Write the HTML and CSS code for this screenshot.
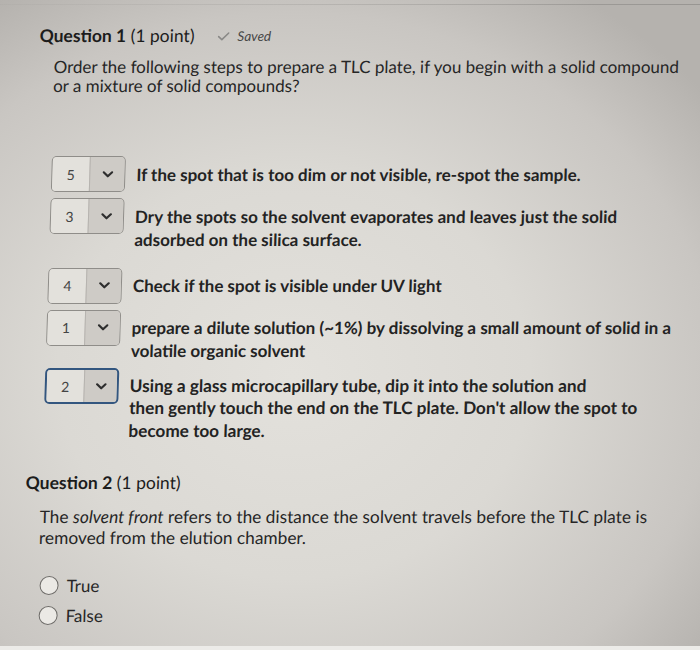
FILE: index.html
```html
<!DOCTYPE html>
<html lang="en">
<head>
<meta charset="utf-8">
<title>Quiz</title>
<link rel="stylesheet" href="styles.css">
</head>
<body>
<div class="screen">
  <div class="topline"></div>
  <div class="sheet">
    <section class="question">
      <div class="q-head">
        <span class="q-title"><b>Question 1</b> (1 point)</span>
        <span class="saved">
          <svg class="saved-check" width="12" height="9" viewBox="0 0 12 9"><path d="M1 4.6 L4.3 7.6 L11 1" fill="none" stroke="#8a8987" stroke-width="1.6" stroke-linecap="round" stroke-linejoin="round"/></svg>
          Saved
        </span>
      </div>
      <p class="prompt">Order the following steps to prepare a TLC plate, if you begin with a solid compound<br>or a mixture of solid compounds?</p>

      <div class="order-list">
        <div class="step">
          <div class="select"><span class="select-val">5</span><span class="select-arrow"><svg width="11" height="7" viewBox="0 0 11 7"><path d="M1.3 1.3 L5.5 5.3 L9.7 1.3" fill="none" stroke="#2e2e2e" stroke-width="2.2" stroke-linecap="round" stroke-linejoin="round"/></svg></span></div>
          <div class="step-text">If the spot that is too dim or not visible, re-spot the sample.</div>
        </div>
        <div class="step step-spaced">
          <div class="select"><span class="select-val">3</span><span class="select-arrow"><svg width="11" height="7" viewBox="0 0 11 7"><path d="M1.3 1.3 L5.5 5.3 L9.7 1.3" fill="none" stroke="#2e2e2e" stroke-width="2.2" stroke-linecap="round" stroke-linejoin="round"/></svg></span></div>
          <div class="step-text">Dry the spots so the solvent evaporates and leaves just the solid<br>adsorbed on the silica surface.</div>
        </div>
        <div class="step">
          <div class="select"><span class="select-val">4</span><span class="select-arrow"><svg width="11" height="7" viewBox="0 0 11 7"><path d="M1.3 1.3 L5.5 5.3 L9.7 1.3" fill="none" stroke="#2e2e2e" stroke-width="2.2" stroke-linecap="round" stroke-linejoin="round"/></svg></span></div>
          <div class="step-text">Check if the spot is visible under UV light</div>
        </div>
        <div class="step">
          <div class="select"><span class="select-val">1</span><span class="select-arrow"><svg width="11" height="7" viewBox="0 0 11 7"><path d="M1.3 1.3 L5.5 5.3 L9.7 1.3" fill="none" stroke="#2e2e2e" stroke-width="2.2" stroke-linecap="round" stroke-linejoin="round"/></svg></span></div>
          <div class="step-text">prepare a dilute solution (~1%) by dissolving a small amount of solid in a<br>volatile organic solvent</div>
        </div>
        <div class="step">
          <div class="select select-focus"><span class="select-val">2</span><span class="select-arrow"><svg width="11" height="7" viewBox="0 0 11 7"><path d="M1.3 1.3 L5.5 5.3 L9.7 1.3" fill="none" stroke="#2e2e2e" stroke-width="2.2" stroke-linecap="round" stroke-linejoin="round"/></svg></span></div>
          <div class="step-text step-text-tight">Using a glass microcapillary tube, dip it into the solution and<br>then gently touch the end on the TLC plate. Don't allow the spot to<br>become too large.</div>
        </div>
      </div>
    </section>

    <section class="question question-2">
      <div class="q-head">
        <span class="q-title"><b>Question 2</b> (1 point)</span>
      </div>
      <p class="prompt prompt-2">The <i>solvent front</i> refers to the distance the solvent travels before the TLC plate is<br>removed from the elution chamber.</p>
      <div class="radios">
        <label class="radio-opt"><span class="radio"></span>True</label>
        <label class="radio-opt"><span class="radio"></span>False</label>
      </div>
    </section>
  </div>
</div>
</body>
</html>
```

FILE: styles.css
```css
html, body {
  margin: 0;
  padding: 0;
}

.screen {
  width: 700px;
  height: 650px;
  box-sizing: border-box;
  overflow: hidden;
  border-bottom: 4px solid #ecebe8;
  background:
    radial-gradient(ellipse 75% 70% at 42% 58%, #e3e1dc 0%, #dbd9d4 45%, #c9c6c2 80%, #b5b2ae 100%);
  font-family: Lato, "Open Sans", "Liberation Sans", sans-serif;
  color: #262626;
}

.topline {
  height: 1px;
  margin-top: 4px;
  background: linear-gradient(90deg, rgba(0, 0, 0, 0.02), rgba(0, 0, 0, 0.16));
}

.sheet {
  transform: skewX(-1.78deg);
  transform-origin: 0 0;
  padding-left: 40px;
}

.q-head {
  display: flex;
  align-items: center;
  margin-top: 20px;
  font-size: 17.5px;
  line-height: 22px;
  color: #1c1c1c;
}

.q-title b {
  font-weight: 700;
}

.saved {
  display: flex;
  align-items: center;
  gap: 8px;
  margin-left: 23px;
  font-size: 13.5px;
  font-style: italic;
  color: #474747;
}

.prompt {
  margin: 10px 0 0 15px;
  font-size: 17px;
  line-height: 19px;
  white-space: nowrap;
}

.order-list {
  display: flex;
  flex-direction: column;
  gap: 6px;
  margin: 61px 0 0 16px;
}

.step {
  display: flex;
  align-items: flex-start;
  gap: 11px;
}

.step-spaced {
  margin-bottom: 11px;
}

.select {
  flex-shrink: 0;
  display: flex;
  width: 74px;
  height: 36px;
  box-sizing: border-box;
  border: 1px solid #8f8d89;
  border-radius: 5px;
  overflow: hidden;
}

.select-focus {
  border: 2px solid #33567f;
}

.select-val {
  width: 37px;
  display: flex;
  align-items: center;
  justify-content: center;
  background: #e3e1dc;
  font-size: 14px;
  color: #444;
}

.select-arrow {
  flex: 1;
  display: flex;
  align-items: center;
  justify-content: center;
  background: #cecbc6;
  border-left: 1px solid #b6b3af;
}

.step-text {
  padding-top: 6.5px;
  font-size: 17px;
  font-weight: 700;
  line-height: 23px;
  white-space: nowrap;
  color: #232323;
}

.step-text-tight {
  font-size: 17.2px;
  line-height: 22.5px;
}

.question-2 .q-head {
  margin-top: 30px;
}

.prompt-2 {
  margin-top: 12px;
  font-size: 17.3px;
  line-height: 21px;
}

.prompt-2 i {
  font-style: italic;
}

.radios {
  display: flex;
  flex-direction: column;
  margin: 22px 0 0 17px;
}

.radio-opt {
  display: flex;
  align-items: center;
  gap: 8px;
  height: 30px;
  font-size: 17px;
}

.radio {
  width: 19px;
  height: 19px;
  box-sizing: border-box;
  border: 1.5px solid #6e6c69;
  border-radius: 50%;
  background: #ebe9e5;
}
```
